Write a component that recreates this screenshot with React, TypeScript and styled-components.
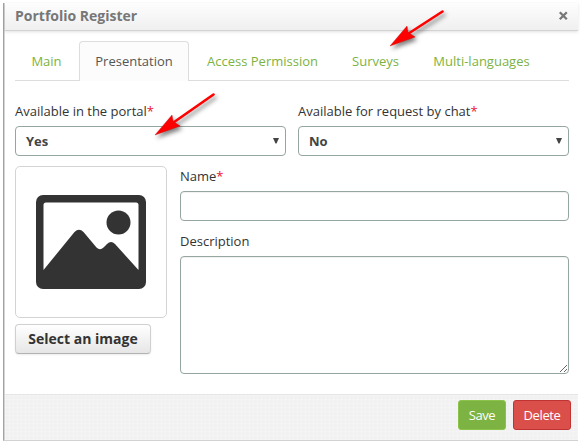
import React from "react";
import styled, { createGlobalStyle } from "styled-components";

const GlobalStyle = createGlobalStyle`
  *, *::before, *::after { box-sizing: border-box; }
  html, body { margin: 0; background: #fff; overflow: hidden; }
  body { font-family: "Open Sans", "Noto Sans", sans-serif; font-size: 13px; line-height: 20px; color: #333; }
`;

const Page = styled.div`
  position: relative;
  width: 581px;
  height: 444px;
  padding: 3px;
`;

const Dialog = styled.section`
  display: flex;
  flex-direction: column;
  width: 575px;
  height: 438px;
  border-left: 1px solid #a3a3a3;
  border-bottom: 1px solid #d2d2d2;
  box-shadow: inset 1px 0 #d4d4d4;
  padding-left: 1px;
`;

const Header = styled.header`
  display: flex;
  align-items: center;
  justify-content: space-between;
  height: 28px;
  flex: none;
  padding: 0 10px 2px 11px;
  background: linear-gradient(#fdfdfd, #f0f0f0);
  border-bottom: 1px solid #d3d3d3;
  box-shadow: 0 1px 3px rgba(0, 0, 0, 0.12);
`;

const Title = styled.h1`
  margin: 0 0 0 -1px;
  font-size: 14px;
  line-height: 20px;
  font-weight: 700;
  color: #777;
`;

const CloseButton = styled.button`
  display: flex;
  padding: 0;
  border: 0;
  background: none;
`;

const Body = styled.main`
  flex: 1;
  padding: 10px 9px 0 10px;
`;

const Tabs = styled.nav`
  display: flex;
  height: 40px;
  border-bottom: 1px solid #ddd;
`;

const Tab = styled.a<{ $active?: boolean; $width: number }>`
  width: ${(p) => p.$width}px;
  height: 40px;
  padding-top: 9px;
  text-align: center;
  white-space: nowrap;
  border: 1px solid ${(p) => (p.$active ? "#ddd" : "transparent")};
  border-bottom: 0;
  border-radius: 4px 4px 0 0;
  background: ${(p) => (p.$active ? "#fcfcfc" : "transparent")};
  color: ${(p) => (p.$active ? "#555" : "#7cb342")};
`;

const Selects = styled.div`
  display: grid;
  grid-template-columns: 271px 271px;
  gap: 12px;
  margin-top: 20px;
`;

const Label = styled.label`
  display: block;
  height: 25px;
  line-height: 21px;
  white-space: nowrap;
`;

const Required = styled.span`
  color: #f01030;
`;

const SelectBox = styled.div`
  display: flex;
  align-items: center;
  justify-content: space-between;
  height: 30px;
  padding: 0 6px 0 10px;
  border: 1px solid #95a5a0;
  border-radius: 4px;
  font-weight: 700;
  color: #444;
`;

const Details = styled.div`
  display: grid;
  grid-template-columns: 152px 389px;
  gap: 13px;
  margin-top: 10px;
`;

const Thumbnail = styled.div`
  height: 152px;
  padding: 28px 20px;
  border: 1px solid #d4d4d4;
  border-radius: 5px;
  svg { display: block; }
`;

const ImageButton = styled.button`
  display: block;
  width: 136px;
  height: 30px;
  margin-top: 6px;
  padding: 0 0 1px;
  border: 1px solid #d0d0d0;
  border-bottom-color: #b3b3b3;
  border-radius: 4px;
  background: linear-gradient(#fff, #e6e6e6);
  box-shadow: 0 1px 2px rgba(0, 0, 0, 0.08);
  font: 700 14px/20px "Open Sans", sans-serif;
  color: #333;
  white-space: nowrap;
`;

const TextInput = styled.input`
  display: block;
  width: 389px;
  height: 30px;
  margin: 0 0 10px;
  border: 1px solid #95a5a0;
  border-radius: 4px;
  box-shadow: inset 0 1px 1px rgba(0, 0, 0, 0.06);
  outline: 0;
`;

const TextArea = styled.textarea`
  display: block;
  width: 389px;
  height: 118px;
  margin: 0;
  border: 1px solid #95a5a0;
  border-radius: 4px;
  box-shadow: inset 0 1px 1px rgba(0, 0, 0, 0.06);
  resize: both;
  outline: 0;
`;

const Footer = styled.footer`
  display: flex;
  justify-content: flex-end;
  gap: 7px;
  flex: none;
  height: 46px;
  padding: 5px 7px 0 0;
  border-top: 1px solid #e5e5e5;
  background:
    repeating-linear-gradient(90deg, rgba(255, 255, 255, 0.18) 0 1px, transparent 1px 4px),
    repeating-linear-gradient(rgba(255, 255, 255, 0.18) 0 1px, transparent 1px 4px),
    #f1f1f1;
`;

const ActionButton = styled.button<{ $danger?: boolean }>`
  width: ${(p) => (p.$danger ? 58 : 48)}px;
  height: 30px;
  padding: 0 0 1px;
  border: 1px solid ${(p) => (p.$danger ? "#c13232" : "#8bc34a")};
  border-radius: 3px;
  background: ${(p) => (p.$danger ? "#da4f4a" : "#7cb342")};
  color: #fff;
  font: 400 13px/20px "Open Sans", sans-serif;
  letter-spacing: -0.4px;
`;

const Pointer = styled.svg<{ $left: number; $top: number }>`
  position: absolute;
  left: ${(p) => p.$left}px;
  top: ${(p) => p.$top}px;
  overflow: visible;
  filter: drop-shadow(2px 3px 2px rgba(0, 0, 0, 0.5));
`;

/* The arrow's tip sits at the bottom left corner of its width x height box. */
const RedArrow = ({ left, top, width, height }: { left: number; top: number; width: number; height: number }) => (
  <Pointer $left={left} $top={top} width={width} height={height} viewBox={`0 0 ${width} ${height}`}>
    <path d={`M${width - 1.5} 1.5 17 ${height - 11.5}`} stroke="#f00" strokeWidth="2.6" strokeLinecap="round" />
    <path
      d={`M0 ${height} L17 ${height - 20} L18.200 ${height - 13.5} L25.200 ${height - 9} Z`}
      fill="#f00"
      stroke="#c01010"
      strokeWidth=".4"
    />
  </Pointer>
);

const Caret = () => (
  <svg width="6" height="6" viewBox="0 0 6 6">
    <path d="M0 0h6L3.500 5.500h-1Z" fill="#444" />
  </svg>
);

const tabs = [
  { label: "Main", width: 63 },
  { label: "Presentation", width: 110, active: true },
  { label: "Access Permission", width: 147 },
  { label: "Surveys", width: 79 },
  { label: "Multi-languages", width: 133 },
];

const TabStrip = styled(Tabs)`
  a:first-child { margin-right: 1px; }
`;

export default function App() {
  return (
    <Page>
      <GlobalStyle />
      <Dialog>
        <Header>
          <Title>Portfolio Register</Title>
          <CloseButton aria-label="Close">
            <svg width="10" height="10" viewBox="0 0 10 10">
              <path d="m1.800 1.200 7 7m0-7-7 7" stroke="#777" strokeWidth="2.300" />
            </svg>
          </CloseButton>
        </Header>
        <Body>
          <TabStrip>
            {tabs.map((t) => (
              <Tab key={t.label} $active={t.active} $width={t.width}>{t.label}</Tab>
            ))}
          </TabStrip>
          <Selects>
            <div>
              <Label>Available in the portal<Required>*</Required></Label>
              <SelectBox>Yes<Caret /></SelectBox>
            </div>
            <div>
              <Label>Available for request by chat<Required>*</Required></Label>
              <SelectBox>No<Caret /></SelectBox>
            </div>
          </Selects>
          <Details>
            <div>
              <Thumbnail>
                <svg width="110" height="94" viewBox="0 0 110 94">
                  <rect width="110" height="94" rx="7" fill="#333" />
                  <path d="M10 7.500h90q2.500 0 2.500 2.500v65L79 49q-4-4-8 0l-3.500 3.500q-3.500 3.500-7 0L47.500 37q-4.500-4.500-9 0L7.500 75V10q0-2.500 2.500-2.500Z" fill="#fff" />
                  <circle cx="82.500" cy="27.500" r="12" fill="#333" />
                </svg>
              </Thumbnail>
              <ImageButton>Select an image</ImageButton>
            </div>
            <div>
              <Label>Name<Required>*</Required></Label>
              <TextInput />
              <Label>Description</Label>
              <TextArea />
            </div>
          </Details>
        </Body>
        <Footer>
          <ActionButton>Save</ActionButton>
          <ActionButton $danger>Delete</ActionButton>
        </Footer>
      </Dialog>
      <RedArrow left={390} top={10} width={54} height={36} />
      <RedArrow left={155} top={93} width={60} height={42} />
    </Page>
  );
}
